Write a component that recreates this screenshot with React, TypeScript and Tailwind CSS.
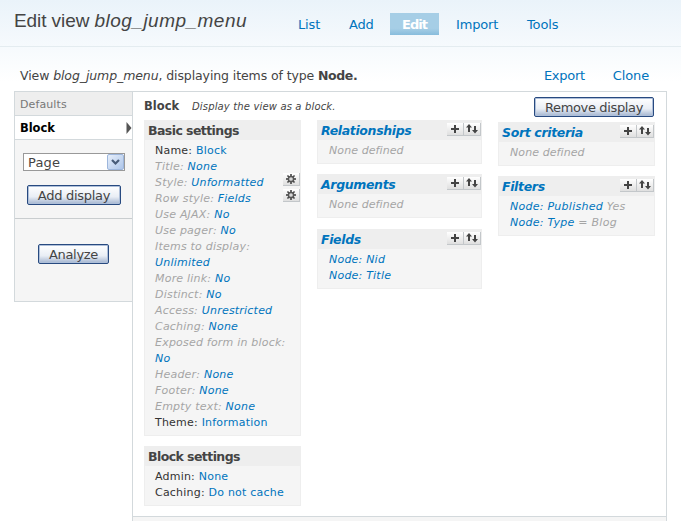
import React from "react";

function PlusIcon() {
  return (
    <svg width="16" height="12" viewBox="0 0 16 12" shapeRendering="crispEdges">
      <path d="M4 5h8v2H4zM7 2h2v8H7z" fill="#444" />
    </svg>
  );
}

function SortIcon() {
  return (
    <svg width="16" height="12" viewBox="0 0 16 12">
      <path d="M5 1 8 4.500H6V9H4V4.500H2z" fill="#444" />
      <path d="M10 3h2v4h2l-3 3.500L8 7h2z" fill="#444" />
    </svg>
  );
}

function GearIcon() {
  const teeth = [0, 45, 90, 135, 180, 225, 270, 315];
  return (
    <svg width="16" height="12" viewBox="0 0 16 12">
      {teeth.map((a) => (
        <path key={a} d="M7.200 1h1.600v2.500H7.200z" fill="#444" transform={`rotate(${a} 8 6)`} />
      ))}
      <circle cx="8" cy="6" r="2.6" fill="#d8d8d8" stroke="#555" strokeWidth="1.5" />
    </svg>
  );
}

const iconFace = "h-[13px] w-[17px] border-r border-b border-[#c3c7ca] bg-linear-to-b from-white to-[#dfdfdf]";

function Actions() {
  return (
    <div className="mt-[2px] flex">
      <button className={iconFace}><PlusIcon /></button>
      <button className={iconFace}><SortIcon /></button>
    </div>
  );
}

function Panel({ title, link, className = "", children }: { title: string; link?: boolean; className?: string; children: React.ReactNode }) {
  return (
    <section className={`border border-[#eeeeee] bg-[#f5f5f5] pb-[4px] ${className}`}>
      <div className="mb-[3px] flex h-[19px] justify-between bg-[#eeeeee] pl-[3px]">
        <h3 className={`text-[12.500px] leading-[19px] font-bold ${link ? "tracking-[-0.350px] text-[#0074bd] italic" : "tracking-[-0.570px] text-[#444]"}`}>{title}</h3>
        {link && <Actions />}
      </div>
      <div className="pl-[10px] text-[11px] leading-[16px]">{children}</div>
    </section>
  );
}

function Row({ label, value, plain, gear }: { label: string; value: string; plain?: boolean; gear?: boolean }) {
  return (
    <div className={`flex h-[16px] justify-between tracking-[0.210px] whitespace-nowrap ${plain ? "text-[#333]" : "text-[#a5a5a5] italic"}`}>
      <span>{label} <a className="text-[#0074bd]">{value}</a></span>
      {gear && <button className={`${iconFace} -mt-[2px]`}><GearIcon /></button>}
    </div>
  );
}

function FormButton({ children, className }: { children: React.ReactNode; className: string }) {
  return (
    <button className={`flex h-[20px] items-center justify-center rounded-[2px] border border-[#284a80] bg-linear-to-b from-white via-[#e9eef5] via-60% to-[#a3b4cf] text-[13px] leading-none whitespace-nowrap text-[#444] shadow-[inset_0_0_0_1px_#aebfd9] ${className}`}>
      {children}
    </button>
  );
}

function NoneDefined() {
  return <div className="pl-px tracking-[0.090px] text-[#a5a5a5] italic">None defined</div>;
}

export default function App() {
  return (
    <div className="flex h-[521px] w-[681px] flex-col overflow-hidden bg-white bg-[linear-gradient(to_bottom,#eaf3fa_0,#ffffff_82px)] font-['DejaVu_Sans',sans-serif] text-[#444]">
      <header className="flex h-[47px] shrink-0 border-b border-[#e4ecf0] pl-[14px]">
        <h1 className="mt-[9px] w-[270px] font-['Liberation_Sans',sans-serif] text-[19px] leading-[24px] tracking-[-0.080px] whitespace-nowrap">
          Edit view <em className="tracking-[0.480px]">blog_jump_menu</em>
        </h1>
        <nav className="mt-[13px] flex h-[22px] text-[13px] leading-[24px] text-[#0074bd]">
          <a className="ml-[14px] w-[51px] tracking-[-0.150px]">List</a>
          <a className="w-[41px] tracking-[-0.150px]">Add</a>
          <a className="w-[49px] bg-linear-to-b from-[#a6cee6] from-70% to-[#87bcdc] text-center font-bold tracking-[-1px] text-white">Edit</a>
          <a className="ml-[17px] w-[71px] tracking-[-0.150px]">Import</a>
          <a className="tracking-[-0.150px]">Tools</a>
        </nav>
      </header>
      <div className="flex h-[44px] shrink-0 items-end pr-[32px] pb-[6px] pl-[20px] text-[13px] leading-[18px]">
        <p className="w-[524px] text-[12.500px] tracking-[-0.100px] whitespace-nowrap">View <em>blog_jump_menu</em>, displaying items of type <b className="tracking-[-0.400px]">Node.</b></p>
        <a className="w-[69px] tracking-[-0.250px] text-[#0074bd]">Export</a>
        <a className="tracking-[-0.150px] text-[#0074bd]">Clone</a>
      </div>
      <div className="ml-[14px] flex w-[653px] grow items-start border-t border-r border-[#d3d9dc] bg-white">
        <aside className="h-[210px] w-[118px] shrink-0 border-b border-l border-[#d3d9dc] bg-[#f5f5f5]">
          <div className="h-[24px] border-b border-[#d3d9dc] bg-[#eeeeee] pl-[5px] text-[11px] leading-[25px] tracking-[0.100px] text-[#777]">Defaults</div>
          <div className="flex h-[24px] items-center justify-between border-b border-[#d3d9dc] bg-white pl-[5px] text-[11.500px] font-bold tracking-[-0.050px] text-black">
            <span className="pt-[2px]">Block</span>
            <svg width="6" height="12" viewBox="0 0 6 12"><path d="M0.500 0 5.500 6 0.500 12z" fill="#555" /></svg>
          </div>
          <div className="flex h-[79px] flex-col border-b border-[#c9cdcf] pt-[13px]">
            <button className="ml-[8px] flex h-[18px] w-[102px] border border-[#999] bg-white pl-[4px] text-left text-[13px] leading-[17px] tracking-[0.200px]">
              <span className="grow">Page</span>
              <span className="flex h-[16px] w-[17px] items-center justify-center rounded-[2px] border border-[#9db6dc] bg-linear-to-br from-[#e7effb] to-[#adc5e9]">
                <svg width="9" height="7" viewBox="0 0 9 7"><path d="m1 1 3.500 3.500L8 1" fill="none" stroke="#475b78" strokeWidth="2.200" /></svg>
              </span>
            </button>
            <FormButton className="mt-[14px] ml-[12px] w-[94px] tracking-[-0.280px]">Add display</FormButton>
          </div>
          <FormButton className="mt-[25px] ml-[23px] w-[71px] tracking-[-0.300px]">Analyze</FormButton>
        </aside>
        <main className="flex h-full grow flex-col border-l border-[#d3d9dc]">
          <div className="flex h-[425px] shrink-0 items-start border-b border-[#d3d9dc] pl-[11px]">
            <div className="w-[173px] shrink-0">
              <div className="flex h-[28px] text-[11.500px] leading-[28px] whitespace-nowrap">
                <b className="w-[48px] shrink-0 tracking-[0.050px]">Block</b>
                <em className="pt-px text-[10px] tracking-[0.150px]">Display the view as a block.</em>
              </div>
              <Panel title="Basic settings" className="w-[157px]">
                <Row label="Name:" value="Block" plain />
                <Row label="Title:" value="None" />
                <Row label="Style:" value="Unformatted" gear />
                <Row label="Row style:" value="Fields" gear />
                <Row label="Use AJAX:" value="No" />
                <Row label="Use pager:" value="No" />
                <Row label="Items to display:" value="" />
                <Row label="" value="Unlimited" />
                <Row label="More link:" value="No" />
                <Row label="Distinct:" value="No" />
                <Row label="Access:" value="Unrestricted" />
                <Row label="Caching:" value="None" />
                <Row label="Exposed form in block:" value="" />
                <Row label="" value="No" />
                <Row label="Header:" value="None" />
                <Row label="Footer:" value="None" />
                <Row label="Empty text:" value="None" />
                <Row label="Theme:" value="Information" plain />
              </Panel>
              <Panel title="Block settings" className="mt-[10px] w-[157px]">
                <Row label="Admin:" value="None" plain />
                <Row label="Caching:" value="Do not cache" plain />
              </Panel>
            </div>
            <div className="flex w-[181px] shrink-0 flex-col pt-[28px]">
              <Panel title="Relationships" link className="w-[165px]"><NoneDefined /></Panel>
              <Panel title="Arguments" link className="mt-[10px] w-[165px]"><NoneDefined /></Panel>
              <Panel title="Fields" link className="mt-[11px] w-[165px]">
                <div className="pl-px">
                  <Row label="" value="Node: Nid" />
                  <Row label="" value="Node: Title" />
                </div>
              </Panel>
            </div>
            <div className="flex w-[157px] shrink-0 flex-col pt-[5px]">
              <FormButton className="mr-px w-[120px] self-end tracking-[-0.350px]">Remove display</FormButton>
              <Panel title="Sort criteria" link className="mt-[5px]"><NoneDefined /></Panel>
              <Panel title="Filters" link className="mt-[10px]">
                <div className="pl-px tracking-[0.260px] text-[#a5a5a5] italic"><a className="text-[#0074bd]">Node: Published</a> Yes</div>
                <div className="pl-px tracking-[0.260px] text-[#a5a5a5] italic"><a className="text-[#0074bd]">Node: Type</a> = Blog</div>
              </Panel>
            </div>
          </div>
          <div className="grow bg-[#f5f5f5]" />
        </main>
      </div>
    </div>
  );
}
